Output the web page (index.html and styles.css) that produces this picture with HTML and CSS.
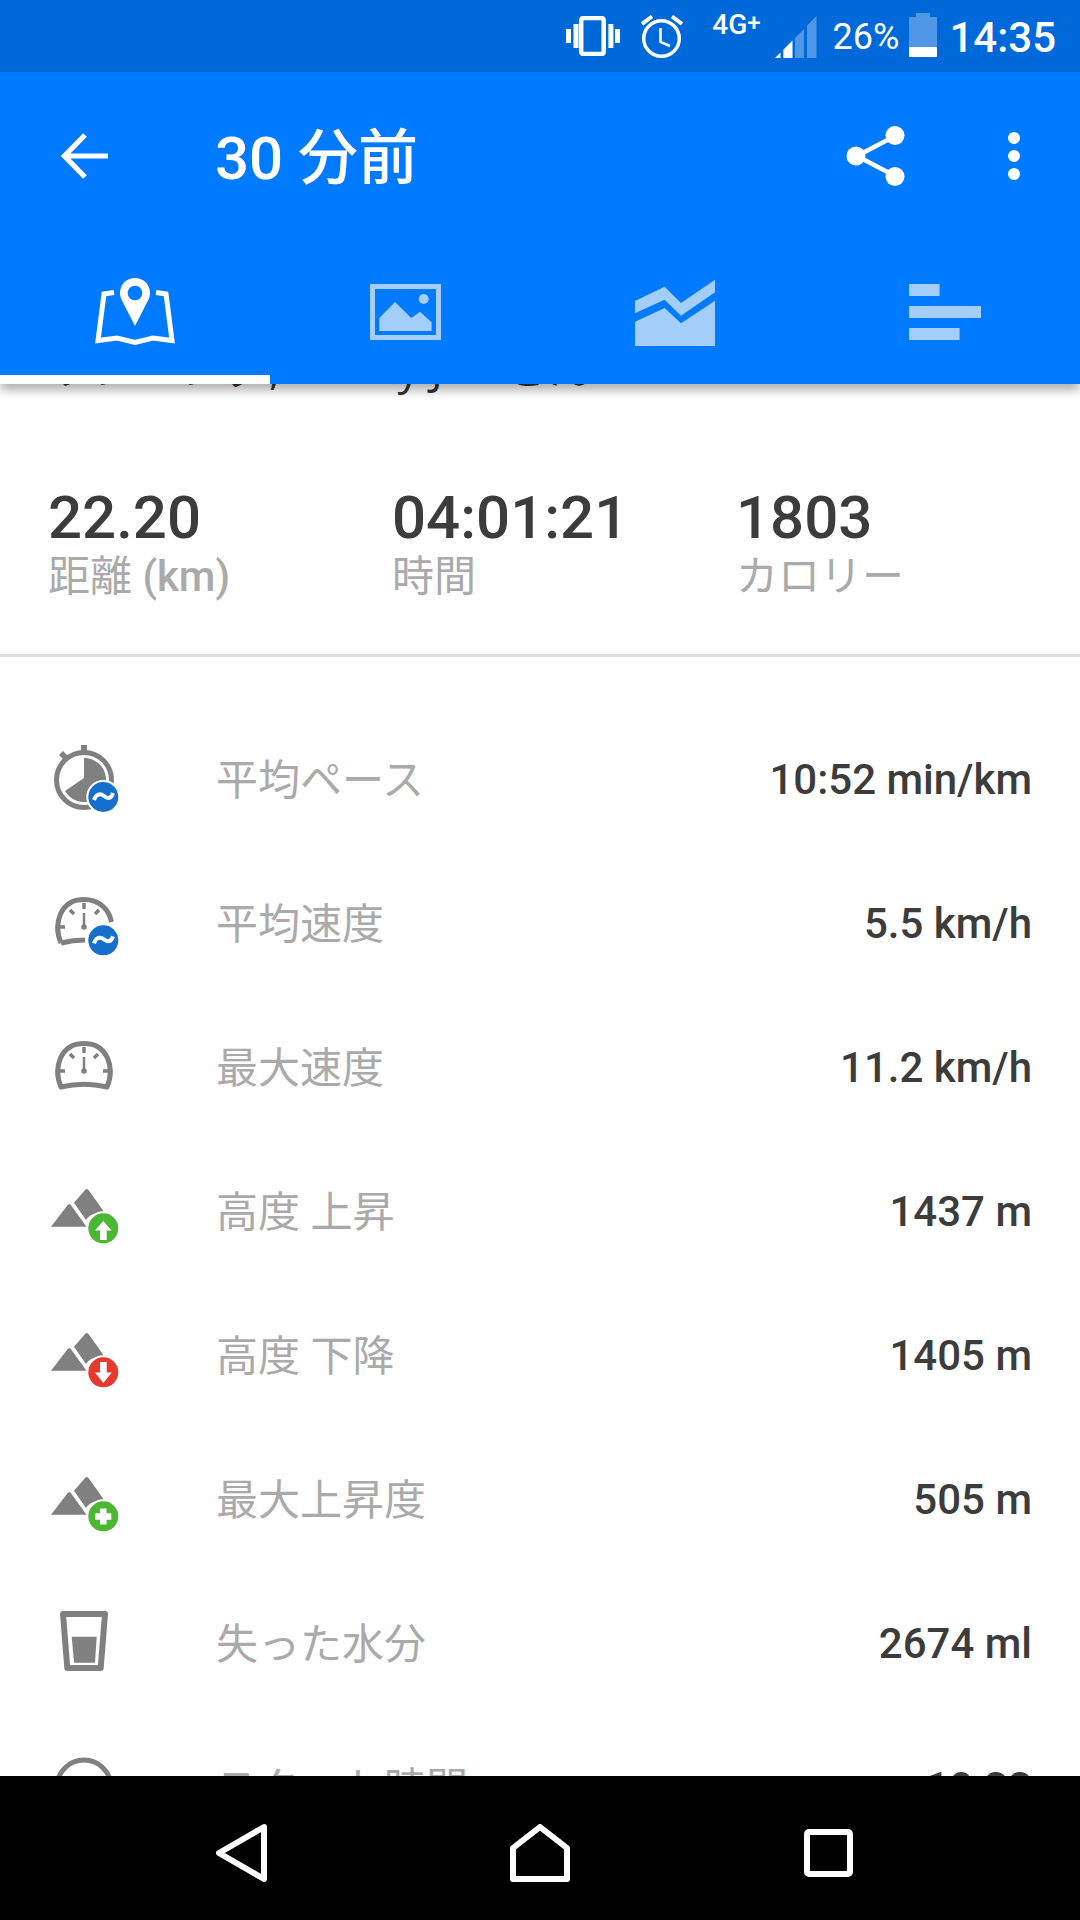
FILE: index.html
```html
<!DOCTYPE html>
<html lang="ja">
<head>
<meta charset="utf-8">
<title>30 分前</title>
<link rel="stylesheet" href="styles.css">
</head>
<body>
<div class="screen">
  <div class="statusbar">
    <svg class="st-vib" viewBox="0 0 54 40" width="54" height="40"><rect x="0" y="13" width="5" height="14" fill="#fff"/><rect x="7.500" y="8" width="5" height="24" fill="#fff"/><rect x="15.200" y="2" width="22.500" height="36" rx="2" fill="none" stroke="#fff" stroke-width="4.500"/><rect x="42.400" y="8" width="5" height="24" fill="#fff"/><rect x="49" y="13" width="5" height="14" fill="#fff"/></svg>
    <svg class="st-alarm" viewBox="0 0 42 43" width="42" height="43"><circle cx="20.500" cy="23.500" r="17.800" fill="none" stroke="#fff" stroke-width="3.500"/><path d="M19.500 13v14l9.500 4" fill="none" stroke="#fff" stroke-width="2.600"/><path d="M1 9L11 1.500M41 9L31 1.500" stroke="#fff" stroke-width="4" fill="none"/></svg>
    <span class="st-net">4G<span class="st-plus">+</span></span>
    <svg class="st-signal" viewBox="0 0 42 42" width="42" height="42"><path d="M20 42V22l9-9v29zM32 42V9.500L41.500 0v42z" fill="#4f96e6"/><path d="M0 42h5.500v-5.500zM8.300 42v-8.300l9.200-9.200V42z" fill="#fff"/></svg>
    <span class="st-pct">26%</span>
    <svg class="st-batt" viewBox="0 0 28 44" width="28" height="44"><path d="M7 0h14v4h7v40H0V4h7z" fill="#4f96e6"/><rect y="34" width="28" height="10" fill="#fff"/></svg>
    <span class="st-time">14:35</span>
  </div>

  <header class="appbar">
    <div class="toolbar">
      <svg class="tb-back" viewBox="0 0 48 48" width="48" height="48"><path d="M47 24H4M24 3L3.500 24 24 45" fill="none" stroke="#fff" stroke-width="5.200"/></svg>
      <h1 class="tb-title">30 分前</h1>
      <svg class="tb-share" viewBox="0 0 60 62" width="60" height="62"><path d="M49 11L11 31l38 20" fill="none" stroke="#fff" stroke-width="4.500"/><circle cx="49" cy="10.500" r="9.500" fill="#fff"/><circle cx="10" cy="31" r="9.500" fill="#fff"/><circle cx="49" cy="51.500" r="9.500" fill="#fff"/></svg>
      <svg class="tb-more" viewBox="0 0 12 48" width="12" height="48"><circle cx="6" cy="6" r="6" fill="#fff"/><circle cx="6" cy="24" r="6" fill="#fff"/><circle cx="6" cy="42" r="6" fill="#fff"/></svg>
    </div>
    <nav class="tabs">
      <div class="tab tab-on">
        <svg viewBox="0 0 80 68" width="80" height="68"><path d="M19 14.500L9 16 3 62.500 22 60l18 4.500L58 60l19 2.500L71 16l-10-1.500" fill="none" stroke="#fff" stroke-width="5"/><path d="M40 0C31.500 0 25 6.500 25 15c0 3.500 1 5.500 2.500 8.500L40 48l12.500-24.500c1.500-3 2.500-5 2.500-8.500C55 6.500 48.500 0 40 0z" fill="#fff"/><circle cx="40" cy="15" r="7.300" fill="#007aff"/></svg>
      </div>
      <div class="tab">
        <svg viewBox="0 0 71 56" width="71" height="56"><rect x="2.500" y="2.500" width="66" height="51" fill="none" stroke="#a3cefa" stroke-width="5"/><circle cx="53.700" cy="15" r="5" fill="#a3cefa"/><path d="M9.300 47V34L25 18l16.300 16L50 27.700l11.600 10.600V47z" fill="#a3cefa"/></svg>
      </div>
      <div class="tab">
        <svg viewBox="0 0 80 67" width="80" height="67"><path d="M0 22L29.600 7.700 46 24 80 .7v12.600L46 36.700 29.600 20.700 0 34.300z" fill="#a3cefa"/><path d="M0 42.700L29.600 29 46 44.300 80 21.700V67H0z" fill="#a3cefa"/></svg>
      </div>
      <div class="tab">
        <svg viewBox="0 0 72 56" width="72" height="56"><rect width="30.600" height="12" fill="#a3cefa"/><rect y="22" width="72" height="12" fill="#a3cefa"/><rect y="44" width="50.600" height="12" fill="#a3cefa"/></svg>
      </div>
    </nav>
  </header>

  <main class="content">
    <p class="peek">ランニング, Kenny Joe さん</p>
    <section class="stats">
      <div class="stat"><div class="stat-val">22.20</div><div class="stat-lab">距離 <b>(km)</b></div></div>
      <div class="stat"><div class="stat-val">04:01:21</div><div class="stat-lab">時間</div></div>
      <div class="stat"><div class="stat-val">1803</div><div class="stat-lab">カロリー</div></div>
    </section>
    <ul class="rows">
      <li class="row">
        <svg class="ico" viewBox="0 0 66 68" width="66" height="68"><path d="M27 0h6v7h-6zM5 10l4-4 6 6-4 4z" fill="#808080"/><circle cx="30" cy="35" r="27.500" fill="none" stroke="#808080" stroke-width="5"/><path d="M30 13A22 22 0 1 1 11 46l19-13z" fill="#808080"/><circle cx="49.300" cy="52" r="17" fill="#fff"/><circle cx="49.300" cy="52" r="15" fill="#1470cc"/><path d="M40 55c2-6 6-7 10-4s7 3 9-3" fill="none" stroke="#fff" stroke-width="4"/></svg>
        <span class="row-lab">平均ペース</span><span class="row-val">10:52 min/km</span>
      </li>
      <li class="row">
        <svg class="ico" viewBox="0 -8 66 68" width="66" height="68"><path d="M7 46C-1 27 6 2.500 30 2.500 45 2.500 55 12 57.500 25M7 46c8-2 15-3 24-3" fill="none" stroke="#808080" stroke-width="5"/><path d="M30 6v6M11 30H5M16 13l4 4M45 13l-4 4" stroke="#808080" stroke-width="3.500" fill="none"/><path d="M30 16v14" stroke="#808080" stroke-width="2.500"/><circle cx="30" cy="30" r="2.800" fill="#808080"/><circle cx="49.300" cy="43.300" r="17" fill="#fff"/><circle cx="49.300" cy="43.300" r="15" fill="#1470cc"/><path d="M40 46.300c2-6 6-7 10-4s7 3 9-3" fill="none" stroke="#fff" stroke-width="4"/></svg>
        <span class="row-lab">平均速度</span><span class="row-val">5.5 km/h</span>
      </li>
      <li class="row">
        <svg class="ico" viewBox="0 -8 66 68" width="66" height="68"><path d="M7 46C-1 27 6 2.500 30 2.500S61 27 53 46c-15-3.500-31-3.500-46 0z" fill="none" stroke="#808080" stroke-width="5" stroke-linejoin="round"/><path d="M30 6v6M11 30H5M49 30h6M16 13l4 4M44 13l-4 4" stroke="#808080" stroke-width="3.500" fill="none"/><path d="M30 16v14" stroke="#808080" stroke-width="2.500"/><circle cx="30" cy="30" r="2.800" fill="#808080"/></svg>
        <span class="row-lab">最大速度</span><span class="row-val">11.2 km/h</span>
      </li>
      <li class="row">
        <svg class="ico ico-mtn" viewBox="0 -12 68 68" width="68" height="68"><path d="M0 37.700l16.500-21.500c1-1.200 2.500-1.200 3.500 0l15.500 21.500z" fill="#808080"/><path d="M23 13.700L34 1c1-1.200 2.500-1.200 3.500 0L53 22.700c-8 1-15 3-18 8.300z" fill="#808080"/><circle cx="52.300" cy="39.300" r="17" fill="#fff"/><circle cx="52.300" cy="39.300" r="15" fill="#4cb733"/><path d="M52.300 32L44 41.500h5V51h6.700v-9.500h5z" fill="#fff"/></svg>
        <span class="row-lab">高度 上昇</span><span class="row-val">1437 m</span>
      </li>
      <li class="row">
        <svg class="ico ico-mtn" viewBox="0 -12 68 68" width="68" height="68"><path d="M0 37.700l16.500-21.500c1-1.200 2.500-1.200 3.500 0l15.500 21.500z" fill="#808080"/><path d="M23 13.700L34 1c1-1.200 2.500-1.200 3.500 0L53 22.700c-8 1-15 3-18 8.300z" fill="#808080"/><circle cx="52.300" cy="39.300" r="17" fill="#fff"/><circle cx="52.300" cy="39.300" r="15" fill="#e8392e"/><path d="M49 29h6.700v10.500h5L52.300 50 44 39.500h5z" fill="#fff"/></svg>
        <span class="row-lab">高度 下降</span><span class="row-val">1405 m</span>
      </li>
      <li class="row">
        <svg class="ico ico-mtn" viewBox="0 -12 68 68" width="68" height="68"><path d="M0 37.700l16.500-21.500c1-1.200 2.500-1.200 3.500 0l15.500 21.500z" fill="#808080"/><path d="M23 13.700L34 1c1-1.200 2.500-1.200 3.500 0L53 22.700c-8 1-15 3-18 8.300z" fill="#808080"/><circle cx="52.300" cy="39.300" r="17" fill="#fff"/><circle cx="52.300" cy="39.300" r="15" fill="#4cb733"/><path d="M52.300 31.500v16M44.300 39.500h16" stroke="#fff" stroke-width="6.500" fill="none"/></svg>
        <span class="row-lab">最大上昇度</span><span class="row-val">505 m</span>
      </li>
      <li class="row">
        <svg class="ico ico-glass" viewBox="0 -2 48 68" width="48" height="68"><path d="M3 3h42l-4.300 54H7.300z" fill="none" stroke="#808080" stroke-width="6" stroke-linejoin="round"/><path d="M11.700 25.700h25L35 51.700H14z" fill="#808080"/></svg>
        <span class="row-lab">失った水分</span><span class="row-val">2674 ml</span>
      </li>
      <li class="row">
        <svg class="ico" viewBox="0 0 60 60" width="60" height="60"><circle cx="30" cy="30" r="27" fill="none" stroke="#808080" stroke-width="5"/></svg>
        <span class="row-lab">スタート時間</span><span class="row-val">10:33</span>
      </li>
    </ul>
  </main>

  <footer class="navbar">
    <svg viewBox="0 0 52 58" width="52" height="58"><path d="M49 3L4 29l45 26z" fill="none" stroke="#fff" stroke-width="6" stroke-linejoin="round"/></svg>
    <svg viewBox="0 0 60 58" width="60" height="58"><path d="M3 55V24L30 3l27 21v31z" fill="none" stroke="#fff" stroke-width="6" stroke-linejoin="round"/></svg>
    <svg viewBox="0 0 49 48" width="49" height="48"><rect x="3" y="3" width="43" height="42" rx="2" fill="none" stroke="#fff" stroke-width="6"/></svg>
  </footer>
</div>
</body>
</html>
```
FILE: styles.css
```css
* { box-sizing: border-box; }
html, body { margin: 0; padding: 0; }
body { font-family: Roboto, "Noto Sans CJK JP", sans-serif; background: #fff; }
.screen { width: 1080px; height: 1920px; display: flex; flex-direction: column; overflow: hidden; }

.statusbar { height: 72px; flex: none; background: #0069d9; color: #fff; display: flex; align-items: flex-start; padding: 15px 24px 0 0; justify-content: flex-end; }
.statusbar svg { flex: none; display: block; }
.st-vib { margin-right: 21px; margin-top: 1px; }
.st-alarm { margin-right: 29px; }
.st-net { font-size: 28px; font-weight: 500; line-height: 28px; margin-right: 14px; margin-top: -6px; }
.st-plus { font-size: 24px; vertical-align: 3px; }
.st-signal { margin-right: 16px; margin-top: 1px; }
.st-pct { font-size: 36px; line-height: 44px; margin-right: 10px; }
.st-batt { margin-right: 12px; margin-top: -2px; }
.st-time { font-size: 42px; line-height: 46px; font-weight: 500; }

.appbar { flex: none; height: 312px; background: #007aff; position: relative; z-index: 2; box-shadow: 0 6px 10px rgba(0,0,0,.32); display: flex; flex-direction: column; }
.toolbar { height: 168px; flex: none; display: flex; align-items: center; padding-left: 61px; }
.tb-back { flex: none; margin-right: 106px; }
.tb-title { flex: 1; margin: -8px 0 0; color: #fff; font-size: 60px; font-weight: 500; }
.tb-share { flex: none; margin-right: 102px; }
.tb-more { flex: none; margin-right: 60px; }
.tabs { flex: 1; display: flex; }
.tab { flex: 1; display: flex; justify-content: center; align-items: center; }
.tab svg { display: block; }
.tab-on { box-shadow: inset 0 -9px 0 #fff; }

.content { flex: 1; min-height: 0; overflow: hidden; }
.peek { margin: -39px 0 0 49px; height: 44px; line-height: 44px; font-family: "Open Sans", "Noto Sans CJK JP", sans-serif; font-size: 44px; color: #333; white-space: nowrap; }

.stats { display: flex; padding: 94px 0 0 48px; height: 268px; border-bottom: 3px solid #e0e0e0; }
.stat { width: 344px; }
.stat-val { font-size: 60px; font-weight: 500; line-height: 70px; color: #3c3c3c; }
.stat-lab { font-size: 42px; line-height: 48px; color: #aaa; }
.stat-lab b { font-weight: 500; }

.rows { list-style: none; margin: 0; padding: 50px 48px 0 0; }
.row { height: 144px; display: flex; align-items: center; position: relative; padding-left: 216px; }
.ico { position: absolute; left: 54px; top: 50%; transform: translateY(-50%); }
.ico-mtn { left: 51px; }
.ico-glass { left: 60px; }
.row-lab { flex: 1; font-size: 42px; color: #aaa; margin-top: -6px; }
.row-val { font-size: 42px; font-weight: 500; color: #3c3c3c; }

.navbar { flex: none; height: 144px; background: #000; display: flex; align-items: center; position: relative; z-index: 2; padding: 9px 0 0 215px; }
.navbar svg { display: block; }
.navbar svg:nth-child(2) { margin-left: 243px; }
.navbar svg:nth-child(3) { margin-left: 234px; }
```
